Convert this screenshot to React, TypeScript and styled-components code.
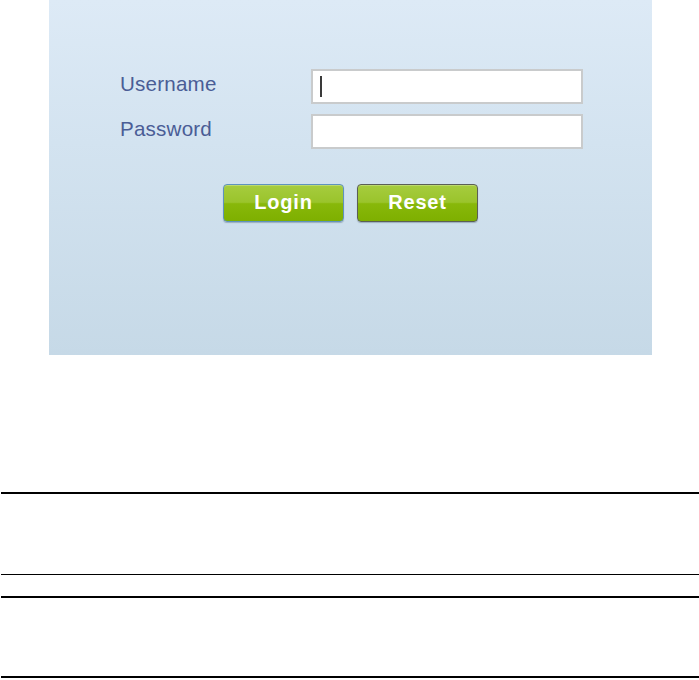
import React from "react";
import styled, { createGlobalStyle } from "styled-components";

const Global = createGlobalStyle`
  html, body { margin: 0; padding: 0; background: #ffffff; }
  body { font-family: "Liberation Sans", Arial, sans-serif; }
`;

const Page = styled.div`
  width: 699px;
  display: flex;
  flex-direction: column;
  align-items: flex-start;
`;

const Panel = styled.div`
  width: 603px;
  height: 355px;
  margin-left: 49px;
  box-sizing: border-box;
  padding: 69px 69px 0 71px;
  background: linear-gradient(180deg, #ddeaf6 0%, #d3e3f0 40%, #c6d9e7 100%);
  display: flex;
  flex-direction: column;
`;

const Form = styled.div`
  display: grid;
  grid-template-columns: 191px 272px;
  row-gap: 10px;
`;

const Label = styled.label`
  display: flex;
  align-items: center;
  padding-bottom: 5px;
  font-family: "Liberation Sans", Arial, sans-serif;
  font-size: 20.6px;
  letter-spacing: 0.2px;
  color: #4a5d96;
`;

const Field = styled.div<{ $focused?: boolean }>`
  position: relative;
  height: 35px;
  box-sizing: border-box;
  border: 2px solid #c9cbcc;
  background: #ffffff;
  &::after {
    content: "";
    display: ${(p) => (p.$focused ? "block" : "none")};
    position: absolute;
    left: 7px;
    top: 5px;
    width: 2px;
    height: 21px;
    background: #3a3a3a;
  }
`;

const Input = styled.input`
  width: 100%;
  height: 100%;
  box-sizing: border-box;
  border: none;
  outline: none;
  background: transparent;
  padding: 0 8px;
  font-family: "Liberation Sans", Arial, sans-serif;
  font-size: 16px;
  caret-color: transparent;
`;

const Buttons = styled.div`
  display: flex;
  justify-content: center;
  gap: 13px;
  margin-top: 35px;
  padding-right: 2px;
`;

const Button = styled.button<{ $edge: string }>`
  width: 121px;
  height: 38px;
  box-sizing: border-box;
  border: 1px solid ${(p) => p.$edge};
  border-radius: 4px;
  background: linear-gradient(180deg, #a6cc3e 0%, #9ac42c 48%, #88b80a 52%, #7eaf00 100%);
  box-shadow: 0 1px 1px rgba(60, 80, 100, 0.35), inset 0 1px 0 rgba(255, 255, 255, 0.25);
  color: #ffffff;
  font-family: "Liberation Sans", Arial, sans-serif;
  font-weight: bold;
  font-size: 20px;
  letter-spacing: 0.8px;
  padding: 0 0 2px;
  cursor: pointer;
`;

const Rules = styled.div`
  width: 699px;
  box-sizing: border-box;
  padding-left: 1px;
  margin-top: 137px;
  display: flex;
  flex-direction: column;
`;

const Rule = styled.div<{ $thick?: boolean }>`
  height: ${(p) => (p.$thick ? 2 : 1)}px;
  background: #000000;
`;

const Gap = styled.div<{ $h: number }>`
  height: ${(p) => p.$h}px;
`;

export default function App() {
  return (
    <>
      <Global />
      <Page>
        <Panel>
          <Form>
            <Label htmlFor="u">Username</Label>
            <Field $focused>
              <Input id="u" type="text" />
            </Field>
            <Label htmlFor="p">Password</Label>
            <Field>
              <Input id="p" type="password" />
            </Field>
          </Form>
          <Buttons>
            <Button $edge="#5f93bd">Login</Button>
            <Button $edge="#5b5f55">Reset</Button>
          </Buttons>
        </Panel>
        <Rules>
          <Rule $thick />
          <Gap $h={80} />
          <Rule />
          <Gap $h={21} />
          <Rule $thick />
          <Gap $h={78} />
          <Rule $thick />
        </Rules>
      </Page>
    </>
  );
}
